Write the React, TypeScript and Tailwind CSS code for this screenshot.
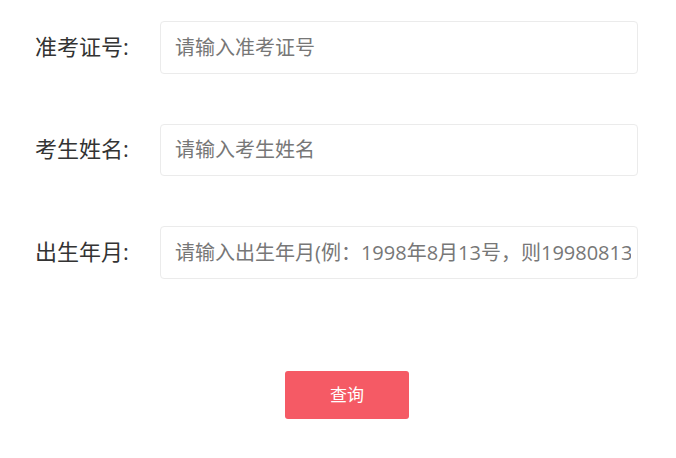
import React from "react";

const fields = [
  { label: "准考证号:", placeholder: "请输入准考证号" },
  { label: "考生姓名:", placeholder: "请输入考生姓名" },
  { label: "出生年月:", placeholder: "请输入出生年月(例：1998年8月13号，则19980813)" },
];

const App: React.FC = () => {
  return (
    <div
      className="w-[676px] h-[458px] bg-white overflow-hidden pt-[21px]"
      style={{ fontFamily: '"Open Sans", "Noto Sans CJK SC", "Noto Sans", sans-serif' }}
    >
      <div className="flex flex-col gap-[50px]">
        {fields.map((f) => (
          <div key={f.label} className="flex items-center">
            <label className="w-[160px] shrink-0 pl-[35px] -mt-[3px] text-[22px] text-[#333333] leading-none">
              {f.label}
            </label>
            <input
              type="text"
              placeholder={f.placeholder}
              className="w-[478px] h-[52.5px] border border-[#ebebeb] rounded-[4px] pl-[14px] pr-[6px] text-[20px] text-[#333] placeholder:text-[#777777] outline-none"
            />
          </div>
        ))}
      </div>

      <div className="mt-[92px] ml-[285px]">
        <button className="w-[124px] h-[48px] rounded-[3px] bg-[#f55a65] text-white text-[17px]">
          查询
        </button>
      </div>
    </div>
  );
};

export default App;
